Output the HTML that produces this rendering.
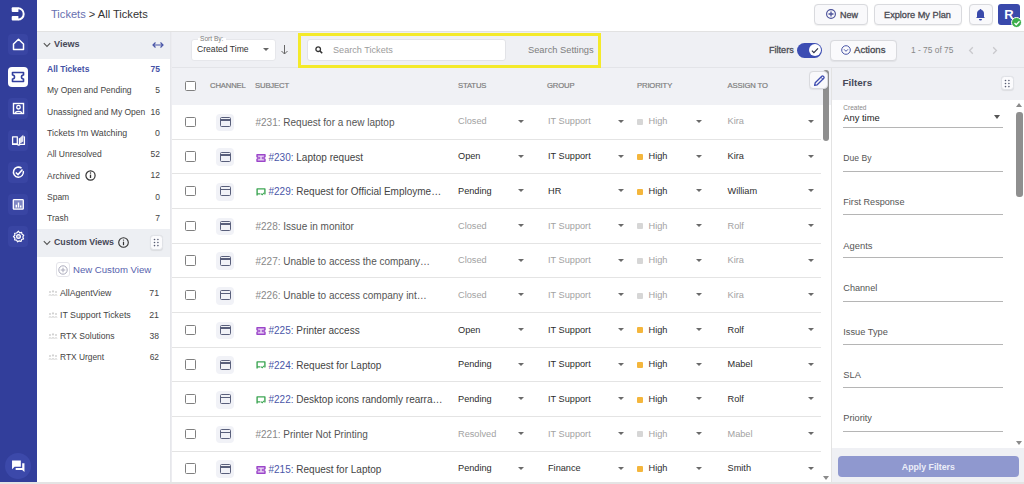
<!DOCTYPE html>
<html><head><meta charset="utf-8">
<style>
*{box-sizing:border-box;margin:0;padding:0}
html,body{width:1024px;height:484px;overflow:hidden;background:#fff;font-family:"Liberation Sans",sans-serif;color:#333}
.abs{position:absolute}
#nav{position:absolute;left:0;top:0;width:37px;height:482px;background:#323e9b}
.nb{position:absolute;left:7.6px;width:20.6px;height:20.6px;border-radius:4px;background:#3945a3}
.nb svg{position:absolute;left:3px;top:3px}
#hdr{position:absolute;left:37px;top:0;width:987px;height:32px;background:#fff;border-bottom:1px solid #e2e2e2}
.btn{position:absolute;background:#f9f9fb;border:1px solid #d9dade;border-radius:4px;box-shadow:0 0.5px 1px rgba(0,0,0,0.06)}
#views{position:absolute;left:37px;top:32px;width:134px;height:452px;background:#fff;border-right:1px solid #e6e7eb}
.vh{position:absolute;left:0;width:133px;height:27px;background:#edeff3}
.vi{position:absolute;left:10px;width:113px;font-size:8.5px;color:#444;white-space:nowrap}
.vi span{position:absolute;right:0}
#main{position:absolute;left:171px;top:32px;width:660px;height:452px;background:#fff;border-left:1px solid #ececf0}
#tb{position:absolute;left:0;top:0;width:853px;height:36px;background:#eff0f4;border-bottom:1px solid #e3e4e8}
.th{position:absolute;top:36px;left:0;width:660px;height:36.6px;background:#f0f1f5}
.hc{position:absolute;font-size:7.7px;color:#7e7e7e;font-weight:normal;letter-spacing:-0.15px;top:49.4px;-webkit-text-stroke:0.2px #7e7e7e}
.row{position:absolute;left:0;width:649px;height:35px;border-bottom:1px solid #e4e4e4}
.cb{position:absolute;left:13.3px;top:12px;width:10.5px;height:10.3px;border:1.3px solid #808080;border-radius:1.5px;background:#fff}
.ch{position:absolute;left:44.3px;top:9px;width:17.6px;height:17.7px;border-radius:4px;background:#f1f2f7}
.ch i{position:absolute;left:3.4px;top:3.4px;width:11.3px;height:10px;border:1.6px solid #595f7b;border-radius:1.5px}
.ch i:after{content:"";position:absolute;left:0;top:1.4px;width:100%;height:1.6px;background:#595f7b}
.sub{position:absolute;left:83.5px;top:12.3px;font-size:10px;color:#555;white-space:nowrap}
.sub b{font-weight:normal}
.st{position:absolute;margin-top:0.4px;left:286px;top:11.5px;font-size:9.2px;white-space:nowrap}
.gr{position:absolute;margin-top:0.4px;left:376px;top:11.5px;font-size:9.2px;white-space:nowrap}
.pr{position:absolute;left:465px;top:11.9px;font-size:9.2px;white-space:nowrap;padding-left:11.5px}
.pr:before{content:"";position:absolute;left:0;top:2.8px;width:6px;height:6px;border-radius:1px;background:#f4b63c}
.as{position:absolute;margin-top:0.4px;left:555.5px;top:11.5px;font-size:9.2px;white-space:nowrap}
.ar{position:absolute;top:15.3px;width:0;height:0;border-left:3.3px solid transparent;border-right:3.3px solid transparent;border-top:3.8px solid #6a6a6a}
.dim{color:#a2a2a2}
.dim.pr:before{background:#d6d6d6}
.dark{color:#2c2c2c}
#filt{position:absolute;left:831px;top:67px;width:193px;height:417px;background:#fff;border-left:1px solid #e3e3e3}
.fl{position:absolute;left:11.2px;width:159.6px;height:1px;background:#b5b5b5}
.ft{position:absolute;left:11.3px;font-size:9.3px;color:#555;margin-top:1px}
.med{font-weight:normal!important;-webkit-text-stroke:0.3px currentColor}
</style></head><body>

<div id="nav">
  <svg class="abs" style="left:6px;top:2px" width="26" height="24" viewBox="6 2 26 24"><path d="M12.7 7.2H18.4V11.9H12.7A1 1 0 0 1 11.7 10.9V8.2A1 1 0 0 1 12.7 7.2Z" fill="#fff"/><path d="M12.7 15.9H18.4V20.6H12.7A1 1 0 0 1 11.7 19.6V16.9A1 1 0 0 1 12.7 15.9Z" fill="#fff"/><path d="M18 8.2A5.7 5.7 0 0 1 18 19.6" fill="none" stroke="#fff" stroke-width="2"/></svg>
  <div class="nb" style="top:34px"><svg width="15" height="15" viewBox="0 0 15 15"><path d="M2.5 7L7.5 2.3L12.5 7V12.5H2.5Z" fill="none" stroke="#fff" stroke-width="1.5" stroke-linejoin="round"/></svg></div>
  <div class="nb" style="top:66.5px;background:#fff;width:20.6px;height:20px;left:7.6px;border-radius:4px"><svg style="left:3.4px;top:4.3px" width="14" height="12" viewBox="0 0 14 12"><path d="M1.5 1.5H12.5V4A2 2 0 0 0 12.5 8V10.5H1.5V8A2 2 0 0 0 1.5 4Z" fill="none" stroke="#323f9e" stroke-width="1.6" stroke-linejoin="round"/></svg></div>
  <div class="nb" style="top:98px"><svg width="15" height="15" viewBox="0 0 15 15"><rect x="2.5" y="2.5" width="10" height="10" fill="none" stroke="#fff" stroke-width="1.4"/><circle cx="7.5" cy="6.2" r="1.8" fill="none" stroke="#fff" stroke-width="1.3"/><path d="M4.3 12.3C4.8 9.8 10.2 9.8 10.7 12.3" fill="none" stroke="#fff" stroke-width="1.3"/></svg></div>
  <div class="nb" style="top:130px"><svg width="15" height="15" viewBox="0 0 15 15"><path d="M1.6 3.8H6.3V11H1.6Z" fill="none" stroke="#fff" stroke-width="1.3" stroke-linejoin="round"/><path d="M1 11.4H6.3L7.2 12H8.2L9.1 11.4H13.4V3.8H12.4" fill="none" stroke="#fff" stroke-width="1.3" stroke-linejoin="round"/><path d="M8.4 11V5.2L12.3 1.8V8.4Z" fill="#fff" fill-opacity="0.85"/><path d="M8.4 5.2V11" stroke="#fff" stroke-width="1.2"/></svg></div>
  <div class="nb" style="top:162px"><svg width="15" height="15" viewBox="0 0 15 15"><path d="M12.3 6A5 5 0 1 1 10.5 3.2" fill="none" stroke="#fff" stroke-width="1.5"/><path d="M4.8 7.5L7 9.6L11.5 4.5" fill="none" stroke="#fff" stroke-width="1.6"/></svg></div>
  <div class="nb" style="top:194px"><svg width="15" height="15" viewBox="0 0 15 15"><rect x="2.3" y="2.6" width="10" height="9.6" rx="0.8" fill="#fff" fill-opacity="0.35" stroke="#fff" stroke-width="1.3"/><path d="M5.3 10.6V7.8M7.5 10.6V5.6M9.7 10.6V8.6" stroke="#fff" stroke-width="1.4"/></svg></div>
  <div class="nb" style="top:226px"><svg width="15" height="15" viewBox="0 0 15 15"><circle cx="7.5" cy="7.5" r="1.9" fill="#fff" fill-opacity="0.4" stroke="#fff" stroke-width="1.2"/><path transform="translate(7.5 7.5) scale(0.92) translate(-7.5 -7.5)" d="M7.5 1.8L8.8 3.5L10.9 3L11.4 5.1L13.2 6.2L12.2 8.1L13 10.1L10.9 10.8L10.2 12.9L8.3 12.2L6.6 13.3L5.4 11.5L3.3 11.2L3.6 9.1L2 7.6L3.6 6.1L3.3 4L5.4 3.7Z" fill="none" stroke="#fff" stroke-width="1.3" stroke-linejoin="round"/></svg></div>
  <div class="abs" style="left:5px;top:452.7px;width:26.4px;height:26px;border-radius:13px;background:#3c49aa"><svg class="abs" style="left:5.7px;top:6.2px" width="14.5" height="14" viewBox="0 0 14 13.5"><path d="M1 1.5H9.5V7.5H3.5L1 10Z" fill="#fff"/><path d="M10.8 4H13V12.5L10.8 10.5H4.5V8.8H10.8Z" fill="#fff"/></svg></div>
</div>

<div id="hdr">
  <div class="abs" style="left:14px;top:7.8px;font-size:11.1px;white-space:nowrap"><span style="color:#6770b0">Tickets</span> <span style="color:#333">&gt; All Tickets</span></div>
  <div class="btn" style="left:777px;top:4.4px;width:54.2px;height:20.8px"></div>
  <svg class="abs" style="left:788.9px;top:9px" width="10" height="10" viewBox="0 0 10 10"><circle cx="5" cy="5" r="4.4" fill="none" stroke="#4b519a" stroke-width="1.15"/><path d="M5 2.5V7.5M2.5 5H7.5" stroke="#4b519a" stroke-width="1.3"/></svg>
  <div class="abs med" style="left:803px;top:10px;font-size:9px;font-weight:bold;color:#4a4a52">New</div>
  <div class="btn" style="left:837.2px;top:4.4px;width:88.3px;height:20.8px"></div>
  <div class="abs med" style="left:847px;top:10px;font-size:9.2px;font-weight:bold;color:#4a4a52;white-space:nowrap">Explore My Plan</div>
  <div class="btn" style="left:931.5px;top:4.4px;width:24.1px;height:20.8px"></div>
  <svg class="abs" style="left:938px;top:8px" width="11" height="13" viewBox="0 0 11 13"><path d="M5.5 1A1 1 0 0 1 6.5 2C8.5 2.5 9 4 9 6V9L10 10H1L2 9V6C2 4 2.5 2.5 4.5 2A1 1 0 0 1 5.5 1Z" fill="#3949ab"/><path d="M4 11H7A1.5 1.5 0 0 1 4 11Z" fill="#3949ab"/></svg>
  <div class="abs" style="left:961px;top:4px;width:22px;height:21px;border-radius:3px;background:#3949ab;color:#fff;font-weight:bold;font-size:13px;text-align:center;line-height:21px">R</div>
  <div class="abs" style="left:974px;top:17px;width:11px;height:11px;border-radius:6px;background:#3bae4a;border:1px solid #fff"><svg class="abs" style="left:1px;top:1px" width="8" height="8" viewBox="0 0 8 8"><path d="M1.5 4L3.2 5.7L6.5 2.3" fill="none" stroke="#fff" stroke-width="1.3"/></svg></div>
</div>

<div id="views">
  <div class="vh" style="top:0"></div>
  <svg class="abs" style="left:6px;top:10px" width="8" height="6" viewBox="0 0 8 6"><path d="M0.8 1.2L4 4.4L7.2 1.2" fill="none" stroke="#555" stroke-width="1.1"/></svg>
  <div class="abs" style="left:17px;top:6.8px;font-size:9.1px;font-weight:bold;color:#464858">Views</div>
  <svg class="abs" style="left:115px;top:9px" width="12" height="8" viewBox="0 0 12 8"><path d="M1 4H11M3.5 1.5L1 4L3.5 6.5M8.5 1.5L11 4L8.5 6.5" fill="none" stroke="#4a56a8" stroke-width="1.2"/></svg>
  <div class="vi" style="top:32px;color:#4552a6;font-weight:bold">All Tickets<span>75</span></div>
  <div class="vi" style="top:53px">My Open and Pending<span>5</span></div>
  <div class="vi" style="top:75px">Unassigned and My Open<span>16</span></div>
  <div class="vi" style="top:96px;font-size:8.8px">Tickets I'm Watching<span>0</span></div>
  <div class="vi" style="top:117px">All Unresolved<span>52</span></div>
  <div class="vi" style="top:138px">Archived<svg style="vertical-align:-2.5px;margin-left:5.3px" width="11" height="11" viewBox="0 0 11 11"><circle cx="5.5" cy="5.5" r="4.6" fill="none" stroke="#333" stroke-width="1.2"/><path d="M5.5 4.6V8" stroke="#333" stroke-width="1.3"/><circle cx="5.5" cy="3.1" r="0.75" fill="#333"/></svg><span>12</span></div>
  <div class="vi" style="top:160px">Spam<span>0</span></div>
  <div class="vi" style="top:181px">Trash<span>7</span></div>
  <div class="vh" style="top:197px;height:28px"></div>
  <svg class="abs" style="left:6px;top:208px" width="8" height="6" viewBox="0 0 8 6"><path d="M0.8 1.2L4 4.4L7.2 1.2" fill="none" stroke="#555" stroke-width="1.1"/></svg>
  <div class="abs" style="left:17px;top:205.2px;font-size:8.8px;font-weight:bold;color:#464858;white-space:nowrap">Custom Views</div>
  <svg class="abs" style="left:81px;top:205px" width="11" height="11" viewBox="0 0 11 11"><circle cx="5.5" cy="5.5" r="4.8" fill="none" stroke="#333" stroke-width="1.1"/><path d="M5.5 4.7V8.2" stroke="#333" stroke-width="1.2"/><circle cx="5.5" cy="3.1" r="0.7" fill="#333"/></svg>
  <div class="abs" style="left:112.6px;top:203.1px;width:13.4px;height:14.9px;border-radius:3.5px;background:#fbfbfd;border:1px solid #e0e2e7;box-shadow:0 0.5px 1px rgba(0,0,0,0.08)"></div>
  <svg class="abs" style="left:115.9px;top:206.1px" width="7" height="9" viewBox="0 0 7 9"><g fill="#575c72"><circle cx="1.5" cy="1.5" r=".8"/><circle cx="4.9" cy="1.5" r=".8"/><circle cx="1.5" cy="4.55" r=".8"/><circle cx="4.9" cy="4.55" r=".8"/><circle cx="1.5" cy="7.6" r=".8"/><circle cx="4.9" cy="7.6" r=".8"/></g></svg>
  <div class="abs" style="left:19px;top:230px;width:14px;height:15px;border-radius:3px;background:#fff;border:1px solid #e4e4ea"></div>
  <svg class="abs" style="left:21px;top:233px" width="10" height="10" viewBox="0 0 10 10"><circle cx="5" cy="5" r="4.2" fill="none" stroke="#aab" stroke-width="1"/><path d="M5 2.7V7.3M2.7 5H7.3" stroke="#aab" stroke-width="1"/></svg>
  <div class="abs" style="left:36px;top:232px;font-size:9.6px;color:#5661ad;white-space:nowrap">New Custom View</div>
  <div class="vi" style="top:256.3px;left:23px;width:99px;font-size:8.75px"><svg class="abs" style="left:-12px;top:2px" width="10" height="6" viewBox="0 0 10 6"><g fill="#d2d2d2"><circle cx="2" cy="2" r="1"/><circle cx="5" cy="1.4" r="1.1"/><circle cx="8" cy="2" r="1"/><path d="M0.3 5.5Q2 3 3.7 5.5ZM3 5.5Q5 2.5 7 5.5ZM6.3 5.5Q8 3 9.7 5.5Z"/></g></svg>AllAgentView<span>71</span></div>
  <div class="vi" style="top:278px;left:23px;width:99px;font-size:8.8px"><svg class="abs" style="left:-12px;top:2px" width="10" height="6" viewBox="0 0 10 6"><g fill="#d2d2d2"><circle cx="2" cy="2" r="1"/><circle cx="5" cy="1.4" r="1.1"/><circle cx="8" cy="2" r="1"/><path d="M0.3 5.5Q2 3 3.7 5.5ZM3 5.5Q5 2.5 7 5.5ZM6.3 5.5Q8 3 9.7 5.5Z"/></g></svg>IT Support Tickets<span>21</span></div>
  <div class="vi" style="top:299.2px;left:23px;width:99px;font-size:8.55px"><svg class="abs" style="left:-12px;top:2px" width="10" height="6" viewBox="0 0 10 6"><g fill="#d2d2d2"><circle cx="2" cy="2" r="1"/><circle cx="5" cy="1.4" r="1.1"/><circle cx="8" cy="2" r="1"/><path d="M0.3 5.5Q2 3 3.7 5.5ZM3 5.5Q5 2.5 7 5.5ZM6.3 5.5Q8 3 9.7 5.5Z"/></g></svg>RTX Solutions<span>38</span></div>
  <div class="vi" style="top:320.3px;left:23px;width:99px;font-size:8.4px"><svg class="abs" style="left:-12px;top:2px" width="10" height="6" viewBox="0 0 10 6"><g fill="#d2d2d2"><circle cx="2" cy="2" r="1"/><circle cx="5" cy="1.4" r="1.1"/><circle cx="8" cy="2" r="1"/><path d="M0.3 5.5Q2 3 3.7 5.5ZM3 5.5Q5 2.5 7 5.5ZM6.3 5.5Q8 3 9.7 5.5Z"/></g></svg>RTX Urgent<span>62</span></div>
</div>

<div id="main">
  <div id="tb">
    <div class="abs" style="left:19.2px;top:7px;width:85.2px;height:22.2px;background:#fff;border-radius:3px;border:1px solid #e6e7eb"></div>
    <div class="abs" style="left:25.5px;top:2.8px;font-size:6.6px;color:#7d7d7d;background:linear-gradient(#eff0f4 45%,#fff 45%);padding:0 2.5px">Sort By:</div>
    <div class="abs" style="left:25px;top:12px;font-size:8.6px;color:#333;white-space:nowrap">Created Time</div>
    <div class="abs" style="left:91px;top:16px;border-left:3.4px solid transparent;border-right:3.4px solid transparent;border-top:3.8px solid #666"></div>
    <svg class="abs" style="left:109px;top:13px" width="7" height="10" viewBox="0 0 7 10"><path d="M3.5 0V9M0.5 6L3.5 9L6.5 6" fill="none" stroke="#666" stroke-width="1"/></svg>
    <div class="abs" style="left:126.3px;top:0.6px;width:302.7px;height:35.4px;z-index:5;border:3.8px solid #f4ea2a"></div>
    <div class="abs" style="left:135px;top:6.5px;width:199.2px;height:22.6px;background:#fff;border-radius:3px;border:1px solid #e2e3e7"></div>
    <svg class="abs" style="left:143px;top:14px" width="8" height="8" viewBox="0 0 8 8"><circle cx="3.2" cy="3.2" r="2.3" fill="none" stroke="#333" stroke-width="1.3"/><path d="M4.9 4.9L7.2 7.2" stroke="#333" stroke-width="1.5"/></svg>
    <div class="abs" style="left:161px;top:13px;font-size:9.15px;color:#9c9c9c;white-space:nowrap">Search Tickets</div>
    <div class="abs" style="left:356px;top:13px;font-size:9.3px;color:#7e7e7e;white-space:nowrap">Search Settings</div>
    <div class="abs med" style="left:597px;top:12.8px;font-size:9.1px;color:#4a4a52;font-weight:bold">Filters</div>
    <div class="abs" style="left:625.2px;top:10.8px;width:25px;height:15.1px;border-radius:8px;background:#3c4db3"></div>
    <div class="abs" style="left:637px;top:12.2px;width:11.6px;height:11.8px;border-radius:6px;background:#fff"></div>
    <svg class="abs" style="left:639.2px;top:14.8px" width="8" height="7" viewBox="0 0 8 7"><path d="M0.9 3.6L2.9 5.6L7 1.3" fill="none" stroke="#2b2f45" stroke-width="1.15"/></svg>
    <div class="btn" style="left:657.5px;top:7.5px;width:67.2px;height:21px;background:#fafafc"></div>
    <svg class="abs" style="left:668.8px;top:13px" width="10" height="10" viewBox="0 0 10 10"><circle cx="5" cy="5" r="4.3" fill="none" stroke="#4a56a8" stroke-width="1"/><path d="M3 4.3L5 6.3L7 4.3" fill="none" stroke="#4a56a8" stroke-width="1"/></svg>
    <div class="abs med" style="left:682px;top:12px;font-size:9.6px;font-weight:bold;color:#4a4a52">Actions</div>
    <div class="abs" style="left:739px;top:13px;font-size:8.4px;color:#888;white-space:nowrap">1 - 75 of 75</div>
    <svg class="abs" style="left:796px;top:13.5px" width="6" height="9" viewBox="0 0 6 9"><path d="M4.8 1.3L1.6 4.5L4.8 7.7" fill="none" stroke="#c9c9cd" stroke-width="1.3"/></svg>
    <svg class="abs" style="left:820px;top:13.5px" width="6" height="9" viewBox="0 0 6 9"><path d="M1.2 1.3L4.4 4.5L1.2 7.7" fill="none" stroke="#c9c9cd" stroke-width="1.3"/></svg>
  </div>
  <div class="th"></div>
  <div class="cb" style="top:49px"></div>
  <div class="hc" style="left:38px">CHANNEL</div>
  <div class="hc" style="left:83px">SUBJECT</div>
  <div class="hc" style="left:286px">STATUS</div>
  <div class="hc" style="left:375px">GROUP</div>
  <div class="hc" style="left:465px">PRIORITY</div>
  <div class="hc" style="left:555.5px">ASSIGN TO</div>
  <div class="row" style="top:72.60px"><div class="cb"></div><div class="ch"><i></i></div><div class="sub"><span style="color:#888">#231:</span> Request for a new laptop</div><div class="st dim">Closed</div><div class="ar" style="left:346px"></div><div class="gr dim">IT Support</div><div class="ar" style="left:446px"></div><div class="pr dim">High</div><div class="ar" style="left:523.5px"></div><div class="as dim">Kira</div><div class="ar" style="left:636px"></div></div>
<div class="row" style="top:107.28px"><div class="cb"></div><div class="ch"><i></i></div><div class="sub" style="padding-left:13px"><svg class="abs" style="left:0.2px;top:2.3px" width="10" height="8" viewBox="0 0 10 8"><path d="M1 0.8H9V2.8A1.2 1.2 0 0 0 9 5.2V7.2H1V5.2A1.2 1.2 0 0 0 1 2.8Z" fill="#ead8f5" stroke="#9b45c9" stroke-width="1.4" stroke-linejoin="round"/><path d="M3.7 2.8V5.2M6.3 2.8V5.2" stroke="#9b45c9" stroke-width="1"/></svg><span style="color:#4a56a8">#230:</span> <span style="color:#444">Laptop request</span></div><div class="st dark">Open</div><div class="ar" style="left:346px"></div><div class="gr dark">IT Support</div><div class="ar" style="left:446px"></div><div class="pr dark">High</div><div class="ar" style="left:523.5px"></div><div class="as dark">Kira</div><div class="ar" style="left:636px"></div></div>
<div class="row" style="top:141.96px"><div class="cb"></div><div class="ch"><i></i></div><div class="sub" style="padding-left:13px"><svg class="abs" style="left:0.3px;top:1.5px" width="10" height="8" viewBox="0 0 10 8"><path d="M1.1 7.4V0.9H8.9V5.9H8.2M4.4 5.9H1.1" fill="none" stroke="#3ea654" stroke-width="1.4" stroke-linejoin="round"/><path d="M5.1 5.6L6.2 6.8L7.9 4.9" fill="none" stroke="#3ea654" stroke-width="1.1"/></svg><span style="color:#4a56a8">#229:</span> <span style="color:#444">Request for Official Employme…</span></div><div class="st dark">Pending</div><div class="ar" style="left:346px"></div><div class="gr dark">HR</div><div class="ar" style="left:446px"></div><div class="pr dark">High</div><div class="ar" style="left:523.5px"></div><div class="as dark">William</div><div class="ar" style="left:636px"></div></div>
<div class="row" style="top:176.64px"><div class="cb"></div><div class="ch"><i></i></div><div class="sub"><span style="color:#888">#228:</span> Issue in monitor</div><div class="st dim">Closed</div><div class="ar" style="left:346px"></div><div class="gr dim">IT Support</div><div class="ar" style="left:446px"></div><div class="pr dim">High</div><div class="ar" style="left:523.5px"></div><div class="as dim">Rolf</div><div class="ar" style="left:636px"></div></div>
<div class="row" style="top:211.32px"><div class="cb"></div><div class="ch"><i></i></div><div class="sub"><span style="color:#888">#227:</span> Unable to access the company…</div><div class="st dim">Closed</div><div class="ar" style="left:346px"></div><div class="gr dim">IT Support</div><div class="ar" style="left:446px"></div><div class="pr dim">High</div><div class="ar" style="left:523.5px"></div><div class="as dim">Kira</div><div class="ar" style="left:636px"></div></div>
<div class="row" style="top:246.00px"><div class="cb"></div><div class="ch"><i></i></div><div class="sub"><span style="color:#888">#226:</span> Unable to access company int…</div><div class="st dim">Closed</div><div class="ar" style="left:346px"></div><div class="gr dim">IT Support</div><div class="ar" style="left:446px"></div><div class="pr dim">High</div><div class="ar" style="left:523.5px"></div><div class="as dim">Kira</div><div class="ar" style="left:636px"></div></div>
<div class="row" style="top:280.68px"><div class="cb"></div><div class="ch"><i></i></div><div class="sub" style="padding-left:13px"><svg class="abs" style="left:0.2px;top:2.3px" width="10" height="8" viewBox="0 0 10 8"><path d="M1 0.8H9V2.8A1.2 1.2 0 0 0 9 5.2V7.2H1V5.2A1.2 1.2 0 0 0 1 2.8Z" fill="#ead8f5" stroke="#9b45c9" stroke-width="1.4" stroke-linejoin="round"/><path d="M3.7 2.8V5.2M6.3 2.8V5.2" stroke="#9b45c9" stroke-width="1"/></svg><span style="color:#4a56a8">#225:</span> <span style="color:#444">Printer access</span></div><div class="st dark">Open</div><div class="ar" style="left:346px"></div><div class="gr dark">IT Support</div><div class="ar" style="left:446px"></div><div class="pr dark">High</div><div class="ar" style="left:523.5px"></div><div class="as dark">Rolf</div><div class="ar" style="left:636px"></div></div>
<div class="row" style="top:315.36px"><div class="cb"></div><div class="ch"><i></i></div><div class="sub" style="padding-left:13px"><svg class="abs" style="left:0.3px;top:1.5px" width="10" height="8" viewBox="0 0 10 8"><path d="M1.1 7.4V0.9H8.9V5.9H8.2M4.4 5.9H1.1" fill="none" stroke="#3ea654" stroke-width="1.4" stroke-linejoin="round"/><path d="M5.1 5.6L6.2 6.8L7.9 4.9" fill="none" stroke="#3ea654" stroke-width="1.1"/></svg><span style="color:#4a56a8">#224:</span> <span style="color:#444">Request for Laptop</span></div><div class="st dark">Pending</div><div class="ar" style="left:346px"></div><div class="gr dark">IT Support</div><div class="ar" style="left:446px"></div><div class="pr dark">High</div><div class="ar" style="left:523.5px"></div><div class="as dark">Mabel</div><div class="ar" style="left:636px"></div></div>
<div class="row" style="top:350.04px"><div class="cb"></div><div class="ch"><i></i></div><div class="sub" style="padding-left:13px"><svg class="abs" style="left:0.3px;top:1.5px" width="10" height="8" viewBox="0 0 10 8"><path d="M1.1 7.4V0.9H8.9V5.9H8.2M4.4 5.9H1.1" fill="none" stroke="#3ea654" stroke-width="1.4" stroke-linejoin="round"/><path d="M5.1 5.6L6.2 6.8L7.9 4.9" fill="none" stroke="#3ea654" stroke-width="1.1"/></svg><span style="color:#4a56a8">#222:</span> <span style="color:#444">Desktop icons randomly rearra…</span></div><div class="st dark">Pending</div><div class="ar" style="left:346px"></div><div class="gr dark">IT Support</div><div class="ar" style="left:446px"></div><div class="pr dark">High</div><div class="ar" style="left:523.5px"></div><div class="as dark">Rolf</div><div class="ar" style="left:636px"></div></div>
<div class="row" style="top:384.72px"><div class="cb"></div><div class="ch"><i></i></div><div class="sub"><span style="color:#888">#221:</span> Printer Not Printing</div><div class="st dim">Resolved</div><div class="ar" style="left:346px"></div><div class="gr dim">IT Support</div><div class="ar" style="left:446px"></div><div class="pr dim">High</div><div class="ar" style="left:523.5px"></div><div class="as dim">Mabel</div><div class="ar" style="left:636px"></div></div>
<div class="row" style="top:419.40px"><div class="cb"></div><div class="ch"><i></i></div><div class="sub" style="padding-left:13px"><svg class="abs" style="left:0.2px;top:2.3px" width="10" height="8" viewBox="0 0 10 8"><path d="M1 0.8H9V2.8A1.2 1.2 0 0 0 9 5.2V7.2H1V5.2A1.2 1.2 0 0 0 1 2.8Z" fill="#ead8f5" stroke="#9b45c9" stroke-width="1.4" stroke-linejoin="round"/><path d="M3.7 2.8V5.2M6.3 2.8V5.2" stroke="#9b45c9" stroke-width="1"/></svg><span style="color:#4a56a8">#215:</span> <span style="color:#444">Request for Laptop</span></div><div class="st dark">Pending</div><div class="ar" style="left:346px"></div><div class="gr dark">Finance</div><div class="ar" style="left:446px"></div><div class="pr dark">High</div><div class="ar" style="left:523.5px"></div><div class="as dark">Smith</div><div class="ar" style="left:636px"></div></div>
  <div class="abs" style="left:651px;top:38px;width:5.8px;height:71px;border-radius:3px;background:#8f8f8f"></div>
  <div class="btn" style="left:637.4px;top:38.6px;width:18.4px;height:18.3px;background:#f9f9fb"></div>
  <svg class="abs" style="left:640.5px;top:41.5px" width="13" height="13" viewBox="0 0 13 13"><path d="M1.6 11.4L2.2 8.8L8.8 2.2A1 1 0 0 1 10.2 2.2L10.8 2.8A1 1 0 0 1 10.8 4.2L4.2 10.8Z" fill="none" stroke="#3f4db0" stroke-width="1.3" stroke-linejoin="round"/><path d="M7.8 3.2L9.8 5.2" stroke="#3f4db0" stroke-width="1"/></svg>
</div>

<div id="filt">
  <div class="abs" style="left:0;top:0;width:192px;height:33px;background:#eff0f4"></div><div class="abs" style="left:-1px;top:0;width:193px;height:1px;background:#e3e4e8"></div>
  <div class="abs" style="left:10.5px;top:9.7px;font-size:9.9px;font-weight:bold;color:#464858">Filters</div>
  <div class="abs" style="left:168.6px;top:9.1px;width:13.7px;height:14.1px;border-radius:3.5px;background:#fbfbfd;border:1px solid #e0e2e7;box-shadow:0 0.5px 1px rgba(0,0,0,0.08)"></div>
  <svg class="abs" style="left:171.89999999999998px;top:11.700000000000003px" width="7" height="9" viewBox="0 0 7 9"><g fill="#575c72"><circle cx="1.5" cy="1.5" r=".8"/><circle cx="4.9" cy="1.5" r=".8"/><circle cx="1.5" cy="4.55" r=".8"/><circle cx="4.9" cy="4.55" r=".8"/><circle cx="1.5" cy="7.6" r=".8"/><circle cx="4.9" cy="7.6" r=".8"/></g></svg>
  <div class="abs" style="left:11.3px;top:37.3px;font-size:6.5px;color:#888">Created</div>
  <div class="abs" style="left:11.2px;top:44.5px;font-size:9.4px;color:#222">Any time</div>
  <div class="abs" style="left:162px;top:48px;border-left:3.5px solid transparent;border-right:3.5px solid transparent;border-top:4px solid #555"></div>
  <div class="fl" style="top:60.4px"></div>
  <div class="ft" style="top:85.2px;font-size:8.6px">Due By</div><div class="fl" style="top:103.7px"></div>
  <div class="ft" style="top:128.6px;font-size:9.1px">First Response</div><div class="fl" style="top:147.0px"></div>
  <div class="ft" style="top:171.9px;font-size:9.4px">Agents</div><div class="fl" style="top:190.3px"></div>
  <div class="ft" style="top:215.3px;font-size:9.15px">Channel</div><div class="fl" style="top:233.6px"></div>
  <div class="ft" style="top:258.7px;font-size:9.25px">Issue Type</div><div class="fl" style="top:276.9px"></div>
  <div class="ft" style="top:302.1px;font-size:9.3px">SLA</div><div class="fl" style="top:320.2px"></div>
  <div class="ft" style="top:345.4px;font-size:9.2px">Priority</div><div class="fl" style="top:363.5px"></div>
  <div class="abs" style="left:184px;top:36px;width:0;border-left:3.5px solid transparent;border-right:3.5px solid transparent;border-bottom:4.5px solid #8a8a8a"></div>
  <div class="abs" style="left:184.3px;top:44.6px;width:6.3px;height:85px;border-radius:3px;background:#8f8f8f"></div>
  <div class="abs" style="left:184.4px;top:373.6px;width:0;border-left:3.5px solid transparent;border-right:3.5px solid transparent;border-top:4.7px solid #8a8a8a"></div>
  <div class="abs" style="left:0;top:381px;width:192px;height:36px;background:#eff0f4"></div>
  <div class="abs" style="left:6px;top:389px;width:180.7px;height:21px;border-radius:4px;background:#8f98cf;color:#eceef8;font-size:8.75px;font-weight:bold;text-align:center;line-height:21px;padding-top:1px">Apply Filters</div>
</div>
<div class="abs" style="left:822.5px;top:475.8px;width:0;border-left:3.5px solid transparent;border-right:3.5px solid transparent;border-top:4.5px solid #8a8a8a"></div>
<div class="abs" style="left:0;top:482px;width:1024px;height:2px;background:#e4e4e4"></div>
</body></html>
